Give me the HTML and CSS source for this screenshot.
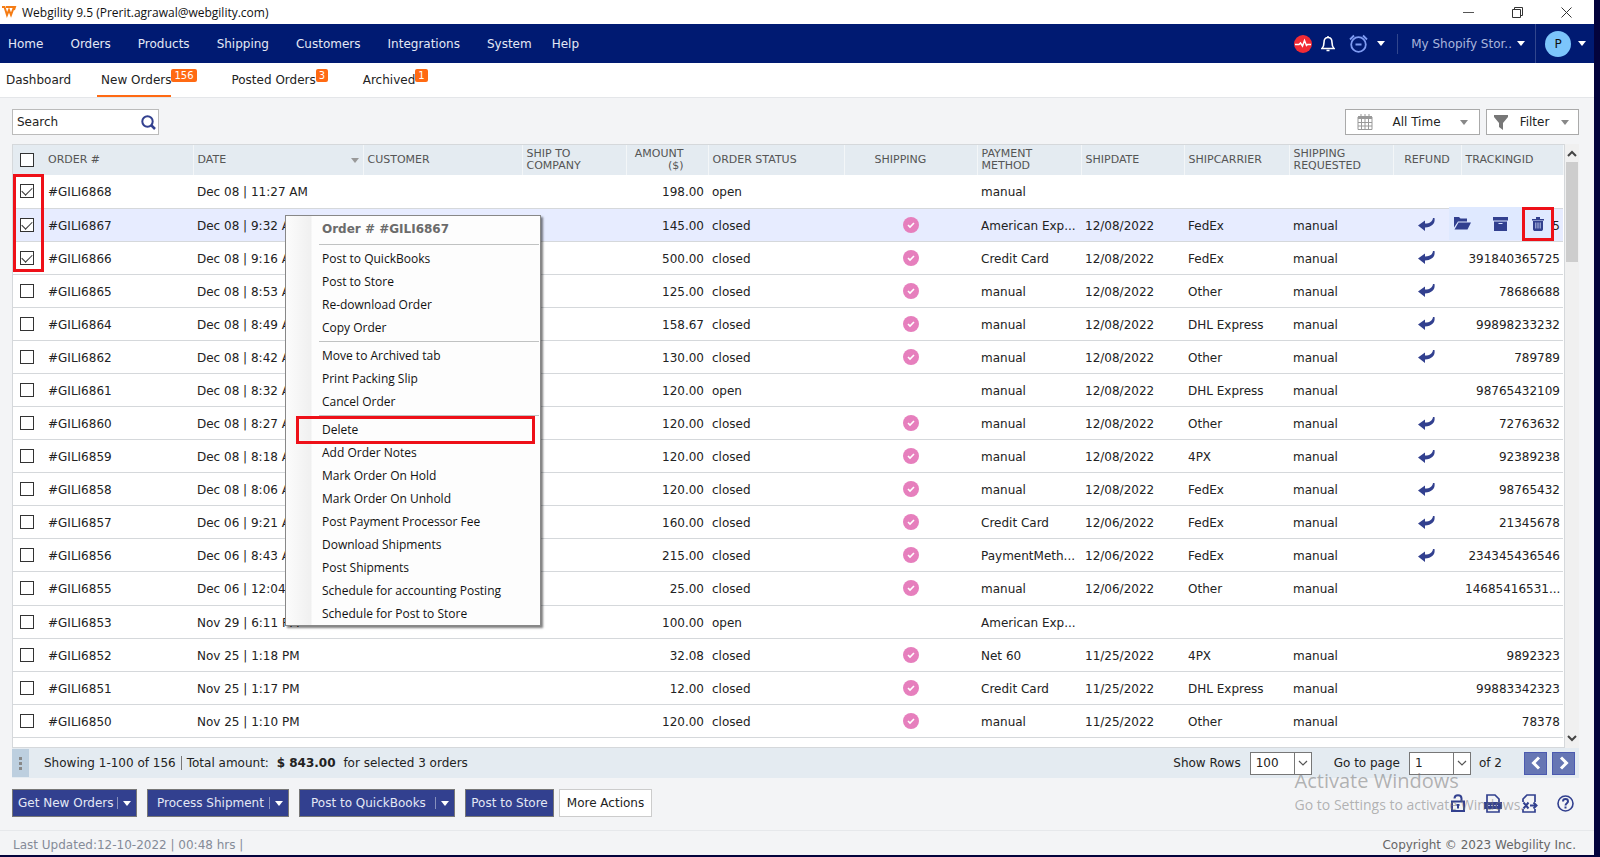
FILE: index.html
```
<!DOCTYPE html>
<html lang="en">
<head>
  <meta charset="utf-8">
  <title>Webgility 9.5</title>
  <link rel="stylesheet" href="styles.css">
</head>
<body>
  <svg class="sprite" aria-hidden="true">
    <symbol id="i-caret" viewBox="0 0 8 5"><path d="M0 0h8L4 5z" fill="currentColor"/></symbol>
    <symbol id="i-down" viewBox="0 0 10 10"><path d="M1 3l4 4 4-4" fill="none" stroke="#555" stroke-width="1.2"/></symbol>
    <symbol id="i-ok" viewBox="0 0 16 16"><circle cx="8" cy="8" r="8" fill="#e67fbd"/><path d="M5 8l2 2 4-4" fill="none" stroke="#fff" stroke-width="1.6"/></symbol>
    <symbol id="i-refund" viewBox="0 0 18 15"><path d="M0 8.500l7-5v3c5 0 7.500-2 8-5.500h1.500c1 6-3 9-9.500 9.500v3.500z" fill="#32408f"/></symbol>
  </svg>

  <div class="window">
    <header class="titlebar">
      <svg class="logo" viewBox="0 0 16 12"><path d="M1 1h2.500l2.500 8 2-5 2 5 3-8M5 1h9l-1 3" fill="none" stroke="#f57c14" stroke-width="2"/></svg>
      <span class="title">Webgility 9.5 (Prerit.agrawal@webgility.com)</span>
      <div class="window-controls">
        <button aria-label="Minimize"><svg width="11" height="11" viewBox="0 0 11 11"><path d="M0 5.500h11" stroke="#555"/></svg></button>
        <button aria-label="Restore"><svg width="11" height="11" viewBox="0 0 11 11"><path d="M.5 2.500h8v8h-8zM2.500 2.500v-2h8v8h-2" fill="none" stroke="#333"/></svg></button>
        <button aria-label="Close"><svg width="11" height="11" viewBox="0 0 11 11"><path d="M.5.5l10 10M10.500.5l-10 10" stroke="#333"/></svg></button>
      </div>
    </header>

    <nav class="navbar">
      <div class="nav-links">
        <a href="#">Home</a>
        <a href="#">Orders</a>
        <a href="#">Products</a>
        <a href="#">Shipping</a>
        <a href="#">Customers</a>
        <a href="#">Integrations</a>
        <a href="#">System</a>
        <a href="#" class="help">Help</a>
      </div>
      <div class="nav-tools">
        <button aria-label="Health"><svg width="18" height="18" viewBox="0 0 18 18"><circle cx="9" cy="9" r="9" fill="#f22b35"/><path d="M1 9.500h4l1.500-1.500 2 3 2-5.500 2 5 1-1H17" fill="none" stroke="#fff" stroke-width="1.500"/></svg></button>
        <button class="bell" aria-label="Notifications"><svg width="14" height="17" viewBox="0 0 14 17"><path d="M7 1v1.500M1 13.500c2-2 2-3 2-6C3 4 4.500 2.500 7 2.500S11 4 11 7.500c0 3 0 4 2 6zM5.500 15.500h3" fill="none" stroke="#fff" stroke-width="1.6"/></svg></button>
        <button class="alarm" aria-label="Schedules"><svg width="19" height="19" viewBox="0 0 19 19"><g fill="none" stroke="#7f9cf2" stroke-width="1.8"><circle cx="9.500" cy="10.500" r="7.300"/><path d="M1 5.500L5 1.500M18 5.500l-4-4M6.500 10.500h6"/></g></svg><svg class="caret"><use href="#i-caret"/></svg></button>
        <button class="store">My Shopify Stor..<svg class="caret"><use href="#i-caret"/></svg></button>
        <button class="profile"><span class="avatar">P</span><svg class="caret"><use href="#i-caret"/></svg></button>
      </div>
    </nav>

    <nav class="tabs">
      <a href="#" class="dashboard">Dashboard</a>
      <a href="#" class="new-orders active">New Orders<span class="count">156</span></a>
      <a href="#" class="posted">Posted Orders<span class="count">3</span></a>
      <a href="#">Archived<span class="count">1</span></a>
    </nav>

    <main>
      <div class="toolbar">
        <div class="search">
          <input type="text" placeholder="Search" aria-label="Search">
          <svg width="15" height="15" viewBox="0 0 15 15"><g fill="none" stroke="#32408f" stroke-width="2"><circle cx="6.500" cy="6.500" r="5.200"/><path d="M10 10l4 4" stroke-width="2.500"/></g></svg>
        </div>
        <div class="filters">
          <button class="tool-btn period">
            <svg width="16" height="16" viewBox="0 0 16 16"><path d="M1 3h14v12.500H1z" fill="none" stroke="#999"/><path d="M1 2h14v3H1z" fill="#999"/><path d="M4 0v4M8 0v4M12 0v4M4.500 5v10M8 5v10M11.500 5v10M1 8.500h14M1 12h14" stroke="#999"/></svg>
            All Time
            <svg class="caret"><use href="#i-caret"/></svg>
          </button>
          <button class="tool-btn filter">
            <svg width="14" height="15" viewBox="0 0 14 15"><path d="M0 0h14v2L9 8v7l-4-3V8L0 2z" fill="#777"/></svg>
            Filter
            <svg class="caret"><use href="#i-caret"/></svg>
          </button>
        </div>
      </div>

      <section class="grid">
        <div class="table-area">
          <table class="orders">
            <colgroup>
              <col class="c-check"><col class="c-order"><col class="c-date"><col class="c-customer"><col class="c-company"><col class="c-amount"><col class="c-status"><col class="c-shipping"><col class="c-payment"><col class="c-shipdate"><col class="c-carrier"><col class="c-requested"><col class="c-refund"><col class="c-tracking">
            </colgroup>
            <thead>
              <tr>
                <th><input type="checkbox" aria-label="Select all"></th>
                <th>ORDER #</th>
                <th><div class="sorted">DATE<svg class="caret"><use href="#i-caret"/></svg></div></th>
                <th>CUSTOMER</th>
                <th>SHIP TO<br>COMPANY</th>
                <th class="amount">AMOUNT<br>($)</th>
                <th>ORDER STATUS</th>
                <th class="shipping">SHIPPING</th>
                <th>PAYMENT<br>METHOD</th>
                <th>SHIPDATE</th>
                <th>SHIPCARRIER</th>
                <th>SHIPPING<br>REQUESTED</th>
                <th class="center">REFUND</th>
                <th>TRACKINGID</th>
              </tr>
            </thead>
            <tbody id="rows"></tbody>
          </table>
          <div class="mark-checks"></div>
          <div class="row-actions">
            <button aria-label="Open"><svg width="17" height="13" viewBox="0 0 17 13"><path d="M0 10.500V0h5l1.500 1.500H13v3H4z" fill="#32408f"/><path d="M4.500 5.500H17l-3.500 7H.5z" fill="#32408f"/></svg></button>
            <button aria-label="Archive"><svg width="15" height="14" viewBox="0 0 15 14"><path d="M0 0h15v3.500H0zM1 4.500h13V14H1z" fill="#32408f"/><path d="M5.500 6.500h4" stroke="#dfe9ff"/></svg></button>
            <button class="trash" aria-label="Delete"><svg width="12" height="14" viewBox="0 0 12 14"><path d="M0 2h12v1.500H0zM4 0h4v2H4zM1 4h10v8.500L10 14H2l-1-1.500z" fill="#32408f"/><path d="M3.800 5.500v6M6 5.500v6M8.200 5.500v6" stroke="#bcc7ea"/></svg></button>
          </div>
        </div>
        <div class="scrollbar">
          <svg width="10" height="10" viewBox="0 0 10 10"><path d="M1 7l4-4 4 4" fill="none" stroke="#444" stroke-width="2"/></svg>
          <div class="thumb"></div>
          <svg class="end" width="10" height="10" viewBox="0 0 10 10"><path d="M1 3l4 4 4-4" fill="none" stroke="#444" stroke-width="2"/></svg>
        </div>
      </section>

      <div class="summary">
        <span class="grip"><i></i><i></i><i></i></span>
        <span class="showing">Showing 1-100 of 156</span>
        <span class="total">Total amount: <b>$ 843.00</b> for selected 3 orders</span>
        <div class="pager">
          <label for="per-page">Show Rows</label>
          <div class="select"><select id="per-page"><option>100</option></select><span><svg width="10" height="10"><use href="#i-down"/></svg></span></div>
          <label class="goto" for="page">Go to page</label>
          <div class="select"><select id="page"><option>1</option><option>2</option></select><span><svg width="10" height="10"><use href="#i-down"/></svg></span></div>
          <span class="of">of 2</span>
          <button aria-label="Previous page"><svg width="10" height="14" viewBox="0 0 10 14"><path d="M8 1.500L2.500 7 8 12.500" fill="none" stroke="#fff" stroke-width="3"/></svg></button>
          <button aria-label="Next page"><svg width="10" height="14" viewBox="0 0 10 14"><path d="M2 1.500L7.500 7 2 12.500" fill="none" stroke="#fff" stroke-width="3"/></svg></button>
        </div>
      </div>

      <div class="actions">
        <button class="btn get">Get New Orders<span class="split"><svg class="caret"><use href="#i-caret"/></svg></span></button>
        <button class="btn process">Process Shipment<span class="split"><svg class="caret"><use href="#i-caret"/></svg></span></button>
        <button class="btn quickbooks">Post to QuickBooks<span class="split"><svg class="caret"><use href="#i-caret"/></svg></span></button>
        <button class="btn post">Post to Store</button>
        <button class="btn more">More Actions</button>
        <div class="utilities">
          <button aria-label="Unlock"><svg width="14" height="18" viewBox="0 0 14 18"><path d="M1 7.500h12V17H1zM3.500 4.500C3.500 0 10.500 0 10.500 4.500v3M7 10.500v4M5.500 11h3" fill="none" stroke="#32408f" stroke-width="2"/></svg></button>
          <button aria-label="Print"><svg width="18" height="19" viewBox="0 0 18 19"><path d="M3 8V1h8l4 4v3M3 14v4h12v-4" fill="none" stroke="#32408f" stroke-width="1.700"/><path d="M0 8h18v7H0z" fill="#32408f"/><path d="M4 11.500h10" stroke="#aab4dd" stroke-dasharray="2 1"/></svg></button>
          <button aria-label="Export to Excel"><svg width="17" height="19" viewBox="0 0 17 19"><path d="M2 8V5l4-4h8v7M2 15v3h12v-3" fill="none" stroke="#32408f" stroke-width="1.700"/><path d="M2.500 8.500l5 6M7.500 8.500l-5 6M9 11.500h6M12.500 8.500l3 3-3 3" fill="none" stroke="#32408f" stroke-width="2"/></svg></button>
          <button aria-label="Help"><svg width="17" height="17" viewBox="0 0 17 17"><g fill="none" stroke="#32408f" stroke-width="1.600"><circle cx="8.500" cy="8.500" r="7.500"/><path d="M6 6.500c0-3.300 5-3.300 5 0 0 1.700-2.500 1.700-2.500 4M8.500 11.500v2" stroke-width="2"/></g></svg></button>
        </div>
      </div>
    </main>

    <footer>
      <span>Last Updated:12-10-2022 | 00:48 hrs |</span>
      <span class="copyright">Copyright © 2023 Webgility Inc.</span>
    </footer>
  </div>

  <div class="watermark">
    <div class="watermark-title">Activate Windows</div>
    <div>Go to Settings to activate Windows.</div>
  </div>

  <div class="context-menu">
    <div class="menu-title">Order # #GILI6867</div>
    <hr>
    <button>Post to QuickBooks</button>
    <button>Post to Store</button>
    <button>Re-download Order</button>
    <button>Copy Order</button>
    <hr>
    <button>Move to Archived tab</button>
    <button>Print Packing Slip</button>
    <button>Cancel Order</button>
    <hr>
    <button class="delete">Delete</button>
    <button>Add Order Notes</button>
    <button>Mark Order On Hold</button>
    <button>Mark Order On Unhold</button>
    <button>Post Payment Processor Fee</button>
    <button>Download Shipments</button>
    <button>Post Shipments</button>
    <button>Schedule for accounting Posting</button>
    <button>Schedule for Post to Store</button>
  </div>

  <script src="orders.js"></script>
</body>
</html>
```
FILE: styles.css
```
*,
*::before,
*::after {
  box-sizing: border-box;
}

body {
  margin: 0;
  height: 100vh;
  padding: 0 6px 2px 0;
  background: #03033c;
  color: #222;
  font-family: "DejaVu Sans", Verdana, sans-serif;
  font-size: 12px;
}

button,
input,
select {
  font: inherit;
  color: inherit;
}

button {
  background: none;
  border: none;
  padding: 0;
  display: flex;
  align-items: center;
  white-space: nowrap;
}

a {
  color: inherit;
  text-decoration: none;
}

.sprite {
  display: none;
}

.caret {
  width: 8px;
  height: 5px;
}

.window {
  height: 100%;
  display: flex;
  flex-direction: column;
  background: #f3f4f6;
}

/* title bar */
.titlebar {
  height: 24px;
  padding: 0 22px 0 1px;
  background: #fff;
  color: #111;
  font-family: "Open Sans", sans-serif;
  display: flex;
  align-items: center;
  gap: 5px;
}

.logo {
  width: 16px;
  height: 12px;
}

.window-controls {
  margin-left: auto;
  display: flex;
  gap: 38px;
}

/* main navigation */
.navbar {
  height: 39px;
  background: #001a72;
  color: #e4e8f5;
  display: flex;
  justify-content: space-between;
}

.nav-links {
  display: flex;
  align-items: center;
  gap: 27px;
  padding-left: 8px;
}

.help {
  margin-left: -7px;
}

.nav-tools {
  display: flex;
  align-items: center;
  padding-right: 8px;
}

.bell {
  margin-left: 9px;
}

.alarm {
  margin-left: 14px;
  gap: 9px;
}

.store {
  margin-left: 12px;
  padding: 3px 10px 3px 13px;
  border-left: 1px solid #31468d;
  color: #a9b5dc;
  gap: 5px;
}

.nav-tools .caret {
  color: #fff;
}

.profile {
  height: 100%;
  padding-left: 9px;
  border-left: 1px solid #31468d;
  gap: 7px;
}

.avatar {
  width: 26px;
  height: 26px;
  border-radius: 50%;
  background: #7cc5fb;
  color: #111;
  display: flex;
  align-items: center;
  justify-content: center;
}

/* order tabs */
.tabs {
  height: 35px;
  background: #fff;
  border-bottom: 1px solid #e4e6e9;
  padding-left: 6px;
  display: flex;
}

.tabs a {
  position: relative;
  display: flex;
  align-items: center;
}

.dashboard {
  margin-right: 26px;
}

.new-orders {
  margin-right: 60px;
  padding-left: 4px;
}

.posted {
  margin-right: 47px;
}

.tabs .active {
  padding-top: 2px;
  border-bottom: 2px solid #ff6a13;
}

.count {
  position: absolute;
  left: 100%;
  top: 6px;
  padding: 0 3px;
  border-radius: 2px;
  background: #ff6a13;
  color: #fff;
  font-size: 10px;
  line-height: 13px;
}

main {
  flex: 1;
  min-height: 0;
  display: flex;
  flex-direction: column;
  padding: 0 15px 0 12px;
}

/* search and filters */
.toolbar {
  padding: 11px 0 9px;
  display: flex;
  justify-content: space-between;
}

.search {
  width: 147px;
  height: 26px;
  background: #fff;
  border: 1px solid #bbb;
  padding-right: 2px;
  display: flex;
  align-items: center;
}

.search input {
  flex: 1;
  min-width: 0;
  border: none;
  background: none;
  padding: 0 4px;
  outline: none;
}

.search input::placeholder {
  color: #222;
}

.filters {
  display: flex;
  gap: 6px;
}

.tool-btn {
  height: 26px;
  background: #fff;
  border: 1px solid #aaa;
  justify-content: space-between;
}

.tool-btn .caret {
  color: #888;
}

.period {
  width: 135px;
  padding: 0 11px;
}

.filter {
  width: 93px;
  padding: 0 9px 0 7px;
}

/* orders table */
.grid {
  flex: 1;
  min-height: 0;
  display: flex;
}

.table-area {
  position: relative;
  flex: 1;
  padding-bottom: 9px;
  background: #fff;
  border: solid #d5d8db;
  border-width: 1px;
}

.orders {
  width: 100%;
  height: 100%;
  table-layout: fixed;
  border-collapse: collapse;
}

.c-check { width: 28px; }
.c-order { width: 152px; }
.c-date { width: 170px; }
.c-customer { width: 159px; }
.c-company { width: 104px; }
.c-amount { width: 82px; }
.c-status { width: 136px; }
.c-shipping { width: 133px; }
.c-payment { width: 104px; }
.c-shipdate { width: 103px; }
.c-carrier { width: 105px; }
.c-requested { width: 104px; }
.c-refund { width: 68px; }
.c-tracking { width: 102px; }

.orders th {
  height: 30px;
  padding: 0 4px;
  background: #e4ebf1;
  border-right: 1px solid #f3f6f8;
  color: #555;
  font-size: 11px;
  line-height: 12px;
  font-weight: normal;
  text-align: left;
}

.orders td {
  height: 33px;
  padding: 2px 4px 0;
  border-bottom: 1px solid #d5d8db;
  white-space: nowrap;
}

.orders th:first-child,
.orders td:first-child {
  padding: 0;
  border-right: none;
}

.orders th:nth-child(2),
.orders td:nth-child(2) {
  padding-left: 7px;
}

.orders .amount {
  text-align: right;
}

.orders th.amount {
  padding-right: 24px;
}

.orders td.tracking {
  text-align: right;
  padding-right: 3px;
}

.orders .center {
  padding: 0;
  text-align: center;
}

.orders th.shipping {
  text-align: center;
  padding-right: 24px;
}

.orders tr.current {
  background: #e7ecff;
}

.orders td svg {
  display: block;
  margin: 0 auto;
}

.sorted {
  display: flex;
  align-items: center;
  justify-content: space-between;
}

.sorted .caret {
  color: #999;
}

input[type="checkbox"] {
  appearance: none;
  display: block;
  width: 14px;
  height: 14px;
  margin: 0 auto;
  border: 1px solid #333;
  background: #fff;
}

input[type="checkbox"]:checked::before {
  content: "";
  display: block;
  width: 10px;
  height: 6px;
  margin: 2px 1px;
  border: solid #333;
  border-width: 0 0 1px 1px;
  transform: rotate(-45deg);
}

/* hover actions of the current row */
.row-actions {
  position: absolute;
  top: 62px;
  right: 10px;
  height: 33px;
  padding-left: 5px;
  background: #dfe9ff;
  display: flex;
  align-items: center;
  gap: 22px;
}

.trash {
  width: 32px;
  height: 34px;
  margin-left: -8px;
  border: 3px solid #ee1018;
  justify-content: center;
}

.mark-checks {
  position: absolute;
  top: 29px;
  left: 0;
  width: 31px;
  height: 98px;
  border: 3px solid #ee1018;
}

.scrollbar {
  width: 17px;
  padding: 5px 1px;
  background: #f0f0f0;
  display: flex;
  flex-direction: column;
  align-items: center;
}

.thumb {
  width: 100%;
  height: 100px;
  margin-top: 3px;
  background: #cdcdcd;
}

.scrollbar .end {
  margin-top: auto;
}

/* summary bar */
.summary {
  height: 30px;
  background: #e4ebf1;
  display: flex;
  align-items: center;
}

.grip {
  width: 17px;
  height: 28px;
  background: #bdcfdf;
  display: flex;
  flex-direction: column;
  align-items: center;
  justify-content: center;
  gap: 2px;
}

.grip i {
  width: 3px;
  height: 3px;
  background: #888;
}

.showing {
  margin-left: 15px;
  padding-right: 5px;
  border-right: 1px solid #777;
}

.total {
  padding-left: 5px;
}

.total b {
  margin: 0 4px;
}

.pager {
  margin-left: auto;
  display: flex;
  align-items: center;
  padding-right: 4px;
}

.select {
  width: 62px;
  height: 23px;
  margin-left: 9px;
  border: 1px solid #777;
  background: #fff;
  display: flex;
}

.select select {
  flex: 1;
  min-width: 0;
  appearance: none;
  border: none;
  background: none;
  padding: 0 5px;
}

.select span {
  width: 17px;
  border-left: 1px solid #777;
  display: flex;
  align-items: center;
  justify-content: center;
}

.goto {
  margin-left: 22px;
}

.of {
  margin: 0 17px 0 8px;
}

.pager button {
  width: 23px;
  height: 23px;
  margin-left: 5px;
  background: #6676b4;
  border: 1px solid #4b5ab0;
  justify-content: center;
}

/* bottom buttons */
.actions {
  padding: 11px 5px 13px 0;
  display: flex;
  align-items: center;
}

.btn {
  height: 28px;
  padding-right: 5px;
  background: #32408f;
  border: 1px solid #777;
  color: #e4e8f5;
  margin-right: 10px;
}

.split {
  margin-left: auto;
  padding-left: 5px;
  height: 12px;
  border-left: 1px solid #8790bd;
  display: flex;
  align-items: center;
  color: #fff;
}

.get {
  width: 125px;
  padding-left: 5px;
}

.process {
  width: 142px;
  padding-left: 9px;
}

.quickbooks {
  width: 156px;
  padding-left: 11px;
}

.post {
  width: 89px;
  padding: 0;
  margin-right: 5px;
  justify-content: center;
}

.more {
  width: 93px;
  padding: 0;
  background: #fff;
  border: 1px solid #ccc;
  color: #222;
  justify-content: center;
}

.utilities {
  margin-left: auto;
  display: flex;
  align-items: center;
  gap: 19px;
}

footer {
  height: 25px;
  padding: 3px 18px 0 13px;
  border-top: 1px solid #e6e8eb;
  color: #858b98;
  display: flex;
  align-items: center;
  justify-content: space-between;
}

.copyright {
  color: #666;
}

.watermark {
  position: absolute;
  right: 76px;
  bottom: 41px;
  color: rgba(120, 120, 120, 0.55);
  font-family: "Open Sans", sans-serif;
  font-size: 14px;
  line-height: 22px;
  pointer-events: none;
}

.watermark-title {
  font-size: 20px;
  line-height: 27px;
}

/* right click menu */
.context-menu {
  position: absolute;
  left: 285px;
  top: 215px;
  width: 256px;
  background: linear-gradient(to right, #fcfcfc, #f0f0f0 25px, #fdfdfd 26px);
  border: 1px solid #888;
  box-shadow: 2px 2px 2px rgba(0, 0, 0, 0.5);
  font-family: "Open Sans", sans-serif;
  color: #111;
}

.menu-title {
  padding-left: 36px;
  line-height: 26px;
  font-family: "DejaVu Sans", Verdana, sans-serif;
  font-weight: bold;
  color: #6b6b6b;
}

.context-menu hr {
  height: 1px;
  margin: 2px 1px;
  border: none;
  background: #c0c2c2;
  margin-left: 33px;
}

.context-menu button {
  position: relative;
  width: 100%;
  height: 23px;
  padding-left: 36px;
}

.delete::after {
  content: "";
  position: absolute;
  left: 10px;
  top: -2px;
  width: 239px;
  height: 28px;
  border: 3px solid #ee1018;
}
```
FILE: orders.js
```
// order, date, amount, status, payment, ship date, carrier, tracking, shipped, refundable
const orders = [
  ["6868", "Dec 08 | 11:27 AM", "198.00", "open", "manual", "", "", "", 0, 0],
  ["6867", "Dec 08 | 9:32 AM", "145.00", "closed", "American Exp...", "12/08/2022", "FedEx", "5", 1, 1],
  ["6866", "Dec 08 | 9:16 AM", "500.00", "closed", "Credit Card", "12/08/2022", "FedEx", "391840365725", 1, 1],
  ["6865", "Dec 08 | 8:53 AM", "125.00", "closed", "manual", "12/08/2022", "Other", "78686688", 1, 1],
  ["6864", "Dec 08 | 8:49 AM", "158.67", "closed", "manual", "12/08/2022", "DHL Express", "99898233232", 1, 1],
  ["6862", "Dec 08 | 8:42 AM", "130.00", "closed", "manual", "12/08/2022", "Other", "789789", 1, 1],
  ["6861", "Dec 08 | 8:32 AM", "120.00", "open", "manual", "12/08/2022", "DHL Express", "98765432109", 0, 0],
  ["6860", "Dec 08 | 8:27 AM", "120.00", "closed", "manual", "12/08/2022", "Other", "72763632", 1, 1],
  ["6859", "Dec 08 | 8:18 AM", "120.00", "closed", "manual", "12/08/2022", "4PX", "92389238", 1, 1],
  ["6858", "Dec 08 | 8:06 AM", "120.00", "closed", "manual", "12/08/2022", "FedEx", "98765432", 1, 1],
  ["6857", "Dec 06 | 9:21 AM", "160.00", "closed", "Credit Card", "12/06/2022", "FedEx", "21345678", 1, 1],
  ["6856", "Dec 06 | 8:43 AM", "215.00", "closed", "PaymentMeth...", "12/06/2022", "FedEx", "234345436546", 1, 1],
  ["6855", "Dec 06 | 12:04 AM", "25.00", "closed", "manual", "12/06/2022", "Other", "14685416531...", 1, 0],
  ["6853", "Nov 29 | 6:11 PM", "100.00", "open", "American Exp...", "", "", "", 0, 0],
  ["6852", "Nov 25 | 1:18 PM", "32.08", "closed", "Net 60", "11/25/2022", "4PX", "9892323", 1, 0],
  ["6851", "Nov 25 | 1:17 PM", "12.00", "closed", "Credit Card", "11/25/2022", "DHL Express", "99883342323", 1, 0],
  ["6850", "Nov 25 | 1:10 PM", "120.00", "closed", "manual", "11/25/2022", "Other", "78378", 1, 0]
];

document.getElementById("rows").innerHTML = orders.map(function (o, i) {
  const [id, date, amount, status, payment, shipdate, carrier, tracking, shipped, refund] = o;
  return `<tr class="${i === 1 ? "current" : ""}">
    <td><input type="checkbox" aria-label="Select #GILI${id}" ${i < 3 ? "checked" : ""}></td>
    <td>#GILI${id}</td>
    <td>${date}</td>
    <td></td>
    <td></td>
    <td class="amount">${amount}</td>
    <td>${status}</td>
    <td class="center">${shipped ? '<svg width="16" height="16"><use href="#i-ok"/></svg>' : ""}</td>
    <td>${payment}</td>
    <td>${shipdate}</td>
    <td>${carrier}</td>
    <td>${carrier ? "manual" : ""}</td>
    <td class="center">${refund ? '<svg width="18" height="15"><use href="#i-refund"/></svg>' : ""}</td>
    <td class="tracking">${tracking}</td>
  </tr>`;
}).join("");
```
